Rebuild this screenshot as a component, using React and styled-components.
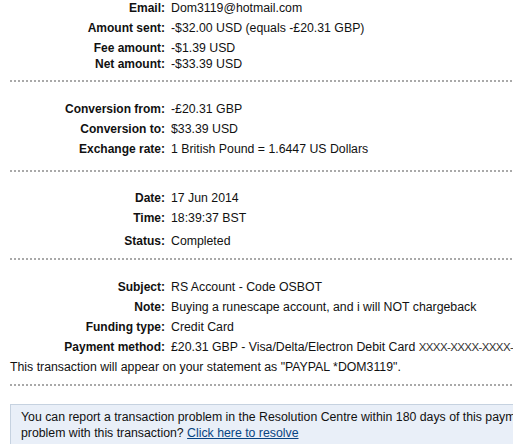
import React from "react";
import styled, { createGlobalStyle } from "styled-components";

const GlobalStyle = createGlobalStyle`
  html, body {
    margin: 0;
    padding: 0;
    background: #fff;
    overflow: hidden;
  }
  body {
    font-family: "Liberation Sans", Arial, sans-serif;
    color: #111;
  }
`;

const sections = [
  {
    rows: [
      { label: "Email:", value: "Dom3119@hotmail.com", gap: 1 },
      { label: "Amount sent:", value: "-$32.00 USD (equals -£20.31 GBP)", gap: 5 },
      { label: "Fee amount:", value: "-$1.39 USD", gap: 5 },
      { label: "Net amount:", value: "-$33.39 USD", gap: 1 },
    ],
    divider: [8, 20],
  },
  {
    rows: [
      { label: "Conversion from:", value: "-£20.31 GBP", gap: 0 },
      { label: "Conversion to:", value: "$33.39 USD", gap: 5 },
      { label: "Exchange rate:", value: "1 British Pound = 1.6447 US Dollars", gap: 5 },
    ],
    divider: [13, 19],
  },
  {
    rows: [
      { label: "Date:", value: "17 Jun 2014", gap: 0 },
      { label: "Time:", value: "18:39:37 BST", gap: 5 },
      { label: "Status:", value: "Completed", gap: 8 },
    ],
    divider: [9, 20],
  },
];

export default function App() {
  return (
    <Page>
      <GlobalStyle />
      {sections.map((section, i) => (
        <React.Fragment key={i}>
          {section.rows.map((row) => (
            <Row key={row.label} $gap={row.gap}>
              <Label>{row.label}</Label>
              <Value>{row.value}</Value>
            </Row>
          ))}
          <Divider $above={section.divider[0]} $below={section.divider[1]} />
        </React.Fragment>
      ))}
      <Row $gap={0}>
        <Label>Subject:</Label>
        <Value>RS Account - Code OSBOT</Value>
      </Row>
      <Row $gap={5}>
        <Label>Note:</Label>
        <Value>Buying a runescape account, and i will NOT chargeback</Value>
      </Row>
      <Row $gap={5}>
        <Label>Funding type:</Label>
        <Value>Credit Card</Value>
      </Row>
      <Row $gap={5}>
        <Label>Payment method:</Label>
        <Value>
          £20.31 GBP - Visa/Delta/Electron Debit Card{" "}
          <CardNumber>XXXX-XXXX-XXXX-1234</CardNumber>
        </Value>
      </Row>
      <Statement>
        This transaction will appear on your statement as "PAYPAL *DOM3119".
      </Statement>
      <Divider $above={9} $below={18} />
      <NoticeBox>
        You can report a transaction problem in the Resolution Centre within 180
        days of this payment. Having a
        <br />
        problem with this transaction?{" "}
        <NoticeLink href="#">Click here to resolve</NoticeLink>
      </NoticeBox>
    </Page>
  );
}

const Page = styled.div`
  width: 640px;
  padding-left: 10px;
`;

const Row = styled.div`
  display: flex;
  align-items: center;
  gap: 6px;
  height: 15px;
  margin-top: ${(p) => p.$gap}px;
  line-height: 15px;
  white-space: nowrap;
`;

const Label = styled.div`
  width: 155px;
  flex: none;
  text-align: right;
  font-weight: bold;
  font-size: 12px;
  color: #111;
`;

const Value = styled.div`
  font-size: 12.3px;
  color: #111;
`;

const CardNumber = styled.span`
  font-size: 11.5px;
  letter-spacing: -0.6px;
  color: #333;
`;

const Statement = styled.div`
  margin-top: 5px;
  height: 15px;
  font-size: 12.3px;
  line-height: 15px;
  white-space: nowrap;
`;

const Divider = styled.div`
  height: 2px;
  margin-top: ${(p) => p.$above}px;
  margin-bottom: ${(p) => p.$below}px;
  background-image: repeating-linear-gradient(
    to right,
    #a9a9a9 0,
    #a9a9a9 2px,
    transparent 2px,
    transparent 4px
  );
`;

const NoticeBox = styled.div`
  padding: 4px 10px 6px 10px;
  background: #e9eff8;
  border: 1px solid #c6d2e0;
  font-size: 12.3px;
  line-height: 16px;
  color: #111;
  white-space: nowrap;
`;

const NoticeLink = styled.a`
  color: #084482;
  text-decoration: underline;
`;
